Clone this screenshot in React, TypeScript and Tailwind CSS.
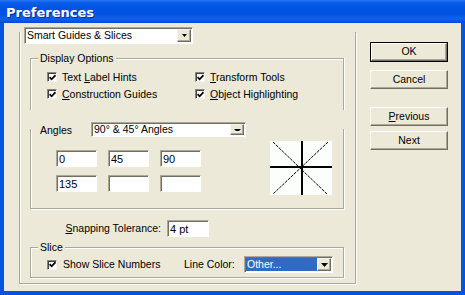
import React from "react";

function CheckBox() {
  return (
    <span className="flex h-[10px] w-[10px] shrink-0 items-center justify-center border border-t-[#8a877a] border-l-[#8a877a] border-b-[#f4f3ee] border-r-[#f4f3ee] bg-white shadow-[inset_1px_1px_0_#404040]">
      <svg width="7" height="7" viewBox="0 0 7 7" className="block">
        <path d="M0.6 3.2 L2.6 5.3 L6.5 1.2" stroke="#000" strokeWidth="1.7" fill="none" />
      </svg>
    </span>
  );
}

function ArrowBtn({ children }: { children: React.ReactNode }) {
  return (
    <span className="flex h-full w-[14px] shrink-0 items-center justify-center border border-t-[#f6f5ef] border-l-[#f6f5ef] border-b-[#716f64] border-r-[#716f64] bg-[#ECE9D8] shadow-[inset_-1px_-1px_0_#aca899]">
      {children}
    </span>
  );
}

function Field({ v, cls }: { v: string; cls: string }) {
  return (
    <div
      className={`${cls} h-[17px] border border-t-[#aca899] border-l-[#aca899] border-b-white border-r-white bg-white pl-[2px] pt-[1px] text-[11px] leading-[14px] shadow-[inset_1px_1px_0_#716f64]`}
    >
      {v}
    </div>
  );
}

function Btn({ children, def }: { children: React.ReactNode; def?: boolean }) {
  const inner = (
    <div className="flex h-full w-full items-center justify-center border border-t-white border-l-white border-b-[#716f64] border-r-[#716f64] bg-[#ECE9D8] shadow-[inset_-1px_-1px_0_#aca899]">
      {children}
    </div>
  );
  return def ? (
    <div className="h-[20px] w-[78px] border border-black">{inner}</div>
  ) : (
    <div className="h-[19px] w-[78px]">{inner}</div>
  );
}

function CheckRow({ children }: { children: React.ReactNode }) {
  return (
    <div className="flex h-[10px] items-center gap-[5px] leading-[10px]">
      <CheckBox />
      <span>{children}</span>
    </div>
  );
}

export default function App() {
  return (
    <div className="flex h-[295px] w-[465px] flex-col bg-[#0852E2] font-['Liberation_Sans',Arial,sans-serif] text-[10.5px] text-black">
      {/* title bar */}
      <div className="flex h-[23px] shrink-0 items-center bg-[linear-gradient(180deg,#2a78f4_0%,#0a5ce8_12%,#0054e3_35%,#0152de_60%,#0c60ea_78%,#0958e6_90%,#0346d4_100%)] pl-[6px] pt-[2px]">
        <span className="font-['DejaVu_Sans',sans-serif] text-[13px] font-bold text-white [text-shadow:1px_1px_0_#0a2a9a]">
          Preferences
        </span>
      </div>

      {/* body */}
      <div className="mx-[4px] mb-[4px] flex flex-1 items-start bg-[#ECE9D8]">
        {/* outer frame */}
        <div className="ml-[15px] mt-[9px] flex w-[337px] flex-col border-b border-l border-r border-[#aca899] pb-[5px] shadow-[inset_1px_0_0_#fff,1px_1px_0_#fff]">
          {/* category dropdown */}
          <div className="-mt-[5px] ml-[4px] flex h-[17px] w-[169px] border border-b-white border-l-[#aca899] border-r-white border-t-[#aca899] bg-white p-[1px] shadow-[inset_1px_1px_0_#716f64]">
            <span className="flex-1 pl-[1px] text-[10.5px] leading-[13px]">Smart Guides &amp; Slices</span>
            <ArrowBtn>
              <svg width="5" height="3" viewBox="0 0 5 3" className="block">
                <polygon points="0,0 5,0 2.5,3" fill="#000" />
              </svg>
            </ArrowBtn>
          </div>

          {/* Display Options */}
          <div className="relative ml-[10px] mt-[14px] flex h-[52px] w-[314px] flex-col border-l border-r border-t border-[#aca899] shadow-[inset_1px_1px_0_#fff,1px_0_0_#fff]">
            <span className="absolute left-[7px] top-[-7px] bg-[#ECE9D8] px-[2px] leading-[12px]">Display Options</span>
            <div className="grid grid-cols-[148px_1fr] gap-y-[7px] pl-[16px] pt-[13px]">
              <CheckRow>
                Text <u>L</u>abel Hints
              </CheckRow>
              <CheckRow>
                <u>T</u>ransform Tools
              </CheckRow>
              <CheckRow>
                <u>C</u>onstruction Guides
              </CheckRow>
              <CheckRow>
                <u>O</u>bject Highlighting
              </CheckRow>
            </div>
          </div>

          {/* Angles */}
          <div className="ml-[10px] mt-[19px] flex w-[314px] flex-col border-b border-l border-r border-[#aca899] pb-[13px] shadow-[inset_1px_0_0_#fff,1px_1px_0_#fff]">
            <div className="-mt-[7px] flex h-[15px] items-center pl-[9px]">
              <span className="w-[51px] leading-[12px]">Angles</span>
              <div className="flex h-[15px] w-[155px] border border-b-white border-l-[#aca899] border-r-white border-t-[#aca899] bg-white p-[1px] shadow-[inset_1px_1px_0_#716f64]">
                <span className="flex-1 pl-[1px] leading-[11px]">90° &amp; 45° Angles</span>
                <ArrowBtn>
                  <svg width="7" height="2" viewBox="0 0 7 2" className="block">
                    <polygon points="0,0 7,0 5,2 2,2" fill="#000" />
                  </svg>
                </ArrowBtn>
              </div>
            </div>
            <div className="mt-[4px] flex items-start">
              <div className="ml-[25px] mt-[9px] grid grid-cols-[41px_41px_41px] gap-x-[11px] gap-y-[8px]">
                <Field v="0" cls="w-[41px]" />
                <Field v="45" cls="w-[41px]" />
                <Field v="90" cls="w-[41px]" />
                <Field v="135" cls="w-[41px]" />
                <Field v="" cls="w-[41px]" />
                <Field v="" cls="w-[41px]" />
              </div>
              <svg width="62" height="54" viewBox="0 0 62 54" className="ml-[69px] block bg-[#fcfefc]">
                <line x1="3" y1="1" x2="57" y2="53" stroke="#000" strokeWidth="1" strokeDasharray="3 1" />
                <line x1="58" y1="1" x2="3" y2="53" stroke="#000" strokeWidth="1" strokeDasharray="3 1" />
                <line x1="0" y1="26" x2="62" y2="26" stroke="#000" strokeWidth="2" />
                <line x1="32" y1="0" x2="32" y2="54" stroke="#000" strokeWidth="2" />
              </svg>
            </div>
          </div>

          {/* Snapping tolerance */}
          <div className="mt-[11px] flex h-[17px] items-center">
            <span className="w-[141px] text-right">
              <u>S</u>napping Tolerance:
            </span>
            <Field v="4 pt" cls="ml-[6px] w-[42px]" />
          </div>

          {/* Slice */}
          <div className="relative ml-[10px] mt-[10px] flex w-[314px] items-center border border-[#aca899] pb-[4px] pt-[8px] shadow-[inset_1px_1px_0_#fff,1px_1px_0_#fff]">
            <span className="absolute left-[7px] top-[-7px] bg-[#ECE9D8] px-[2px] leading-[12px]">Slice</span>
            <div className="flex h-[17px] w-[153px] items-center gap-[6px] pl-[16px]">
              <CheckBox />
              <span>Show Slice Numbers</span>
            </div>
            <span className="w-[60px]">Line Color:</span>
            <div className="flex h-[17px] w-[89px] border border-b-white border-l-[#aca899] border-r-white border-t-[#aca899] bg-white p-[1px] shadow-[inset_1px_1px_0_#716f64]">
              <span className="flex-1 bg-[#316AC5] pl-[1px] leading-[13px] text-white">Other...</span>
              <ArrowBtn>
                <svg width="7" height="4" viewBox="0 0 7 4" className="block">
                  <polygon points="0,0 7,0 3.5,4" fill="#000" />
                </svg>
              </ArrowBtn>
            </div>
          </div>
        </div>

        {/* buttons */}
        <div className="ml-[14px] mt-[19px] flex w-[78px] flex-col">
          <Btn def>OK</Btn>
          <div className="mt-[8px]">
            <Btn>Cancel</Btn>
          </div>
          <div className="mt-[18px]">
            <Btn>
              <span>
                <u>P</u>revious
              </span>
            </Btn>
          </div>
          <div className="mt-[5px]">
            <Btn>Next</Btn>
          </div>
        </div>
      </div>
    </div>
  );
}
